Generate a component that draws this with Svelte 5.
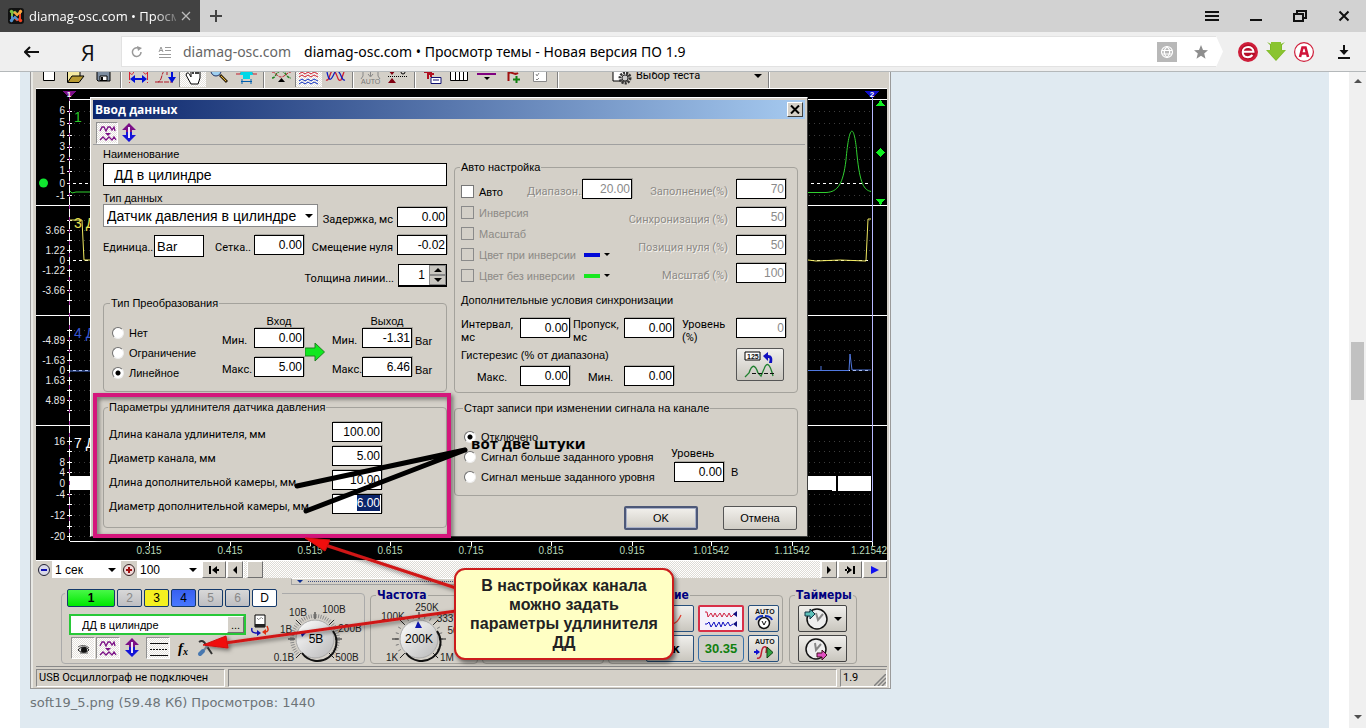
<script>
  const panes = [
    { labels: [['6', 110], ['5', 122], ['4', 134], ['3', 146], ['2', 158], ['1', 170], ['0', 183], ['-1', 195]], dots: [111, 123, 135, 147, 159, 171, 195] },
    { labels: [['3.66', 230], ['1.22', 250], ['0', 260], ['-1.22', 270], ['-3.66', 290]], dots: [220, 230, 240, 250, 270, 280, 290, 300] },
    { labels: [['-4.89', 340], ['-1.63', 360], ['0', 370], ['1.63', 380], ['4.89', 400]], dots: [330, 340, 350, 360, 380, 390, 400, 410] },
    { labels: [['16', 441], ['8', 462], ['4', 472], ['0', 483], ['-4', 494], ['-12', 515], ['-20', 536]], dots: [441, 451, 462, 472, 494, 504, 515, 526, 536] }
  ];
  const times = [['0.315', 149], ['0.415', 230], ['0.515', 310], ['0.615', 390], ['0.715', 471], ['0.815', 551], ['0.915', 632], ['1.01542', 711], ['1.11542', 792], ['1.21542', 872, 869]];
  const extender = [
    ['Длина канала удлинителя, мм', '100.00'],
    ['Диаметр канала, мм', '5.00'],
    ['Длина дополнительной камеры, мм', '10.00'],
    ['Диаметр дополнительной камеры, мм', '6.00']
  ];
  const autoFields = [['Заполнение(%)', '70'], ['Синхронизация (%)', '50'], ['Позиция нуля (%)', '50'], ['Масштаб (%)', '100']];
  const channels = [['1', 'one'], ['2', 'off'], ['3', 'three'], ['4', 'four'], ['5', 'off'], ['6', 'off'], ['D', 'digital']];
  const ticks = (cx, cy, from, to, n, r1, r2) =>
    Array.from({ length: n }, (_, i) => {
      const a = ((from + ((to - from) * i) / (n - 1)) * Math.PI) / 180;
      return `M${cx + r1 * Math.cos(a)} ${cy + r1 * Math.sin(a)}L${cx + r2 * Math.cos(a)} ${cy + r2 * Math.sin(a)}`;
    }).join('');
</script>

{#snippet tool(name, body, pressed)}
  <button class="tool" class:pressed aria-label={name}>
    <svg viewBox="0 0 27 16" width="27" height="16" fill="none">{@render body()}</svg>
  </button>
{/snippet}
{#snippet iNew()}<path d="M7.500 -4V8.500H18.500V-4Z" fill="#fff" stroke="#000" />{/snippet}
{#snippet iOpen()}<path d="M4.500 10V-1H17V4" fill="#f5e9a0" stroke="#000" /><path d="M4.500 10.500L9 4H21L16 10.500Z" fill="#b89a30" stroke="#000" />{/snippet}
{#snippet iSave()}<path d="M7 -3H20V9H8L7 8Z" fill="#7d8da0" stroke="#000" /><path d="M10 4H17V8.500H10Z" fill="#fff" stroke="#000" /><path d="M12 5V8" stroke="#000" stroke-width="2" />{/snippet}
{#snippet iSpan()}<path d="M4 -1C6 4 8 3 9 -1M18 -1C20 4 22 2 23 -1M4.500 0V11M22.500 0V11" stroke="#d82030" stroke-dasharray="8 2" /><path d="M7 7H20" stroke="#0010d8" stroke-width="2" /><path d="M5 7L10 3V11ZM22 7L17 3V11Z" fill="#0010d8" />{/snippet}
{#snippet iDrop()}<path d="M3 10H6C10 9 9 3 12 -1H15V3M6 10H21" stroke="#b01828" stroke-dasharray="5 1" /><path d="M20 -2V7" stroke="#0010d8" stroke-width="2" /><path d="M16 5H24L20 11Z" fill="#0010d8" />{/snippet}
{#snippet iHand()}<path d="M7 1C9 0 10 4 11 5V-3H13V2V-4H16V2V-3H18V2V-1H20V6L18 12H11L6 3Z" fill="#fff" stroke="#000" />{/snippet}
{#snippet iZoom()}<circle cx="10" cy="-1" r="5" fill="#9fd0f0" stroke="#203060" /><path d="M14 3L21 10" stroke="#3a2a10" stroke-width="3" /><path d="M15 4L20 9" stroke="#e8b830" />{/snippet}
{#snippet iProbe()}<path d="M3 2H7L10 -2H17L20 2H24" stroke="#c02030" /><path d="M8 -1H19L20 3H17V7H10V3H7Z" fill="#00d8e8" /><path d="M8 9.500H19M9 7V12M18 7V12" stroke="#0060b0" />{/snippet}
{#snippet iTrig()}<path d="M4 6C8 6 8 -1 13 -1S18 6 23 6" stroke="#208020" stroke-width="1.500" stroke-dasharray="3 1" /><path d="M4 0C8 0 9 5 13 5S19 0 23 0" stroke="#c02030" stroke-dasharray="3 1" /><path d="M10 10L13.500 6L17 10Z" fill="#000" />{/snippet}
{#snippet iWaves()}<path d="M3 2L6 0L9 2L12 0L15 2L18 0L22 2M3 5L6 3L9 5L12 3L15 5L18 3L22 5" stroke="#d02030" /><path d="M3 9L6 7L9 9L12 7L15 9L18 7L22 9M3 12L6 10L9 12L12 10L15 12L18 10L22 12" stroke="#1030c0" />{/snippet}
{#snippet iPhase()}<path d="M4 8C8 10 8 -4 12 -1S15 10 19 8L22 0" stroke="#d02030" stroke-width="1.300" /><path d="M5 0C7 10 9 8 11 4S14 -4 17 0S20 9 23 8" stroke="#1020c0" stroke-width="1.300" />{/snippet}
{#snippet iAuto()}<path d="M6 -1V4L4 7M21 -1V4L23 7M13.500 -2V4M11 2L13.500 5L16 2" stroke="#888" /><text x="4" y="12" class="micro" fill="#777">AUTO</text>{/snippet}
{#snippet iLevel()}<path d="M4 -2H12L8 3ZM4 11H12L8 6Z" fill="#800010" /><path d="M4 4.500H23" stroke="#000" stroke-dasharray="1 1" /><circle cx="19" cy="0" r="2" stroke="#000" />{/snippet}
{#snippet iTune()}<path d="M5 0H13M9 -1V7M9 2H15M12 1V5" stroke="#b01020" stroke-width="2" /><path d="M12 5.500H22V11.500H12Z" fill="#fff" stroke="#101070" /><path d="M14 8H20" stroke="#101070" />{/snippet}
{#snippet iCols()}<path d="M4.500 -2H21.500V8.500H4.500ZM9.500 0V8M13.500 0V8M17.500 0V8" fill="#fff" stroke="#000" />{/snippet}
{#snippet iCursor()}<path d="M4 2H23" stroke="#800080" stroke-width="2" /><path d="M11 5H17L14 8Z" fill="#000" />{/snippet}
{#snippet iFlag()}<path d="M8.500 9V0M9 1C12 -1 14 4 18 1" stroke="#a01010" stroke-width="2" /><path d="M16.500 4V11M13 7.500H20" stroke="#108010" stroke-width="2" />{/snippet}
{#snippet iList()}<path d="M6.500 -3H19.500V9.500H6.500Z" fill="#fff" stroke="#888" /><path d="M9 2L10 4L12 1M9 7L10 8L12 6" stroke="#888" />{/snippet}
{#snippet waveIcon()}<path d="M3 8L5 4L7 4L9 8L11 4L13 4L15 7L17 4L18 8M3 17L6 14L9 17L12 14L15 17L17 14L19 17" stroke="#7b1087" stroke-width="1.300" fill="none" /><path d="M8 10H14L11 13Z" fill="#7b1087" />{/snippet}
{#snippet updown()}<path d="M11 1L18 8H14V11H8V8H4Z" fill="#7b1087" /><path d="M11 20L18 13H14V10H8V13H4Z" fill="#1414d8" /><path d="M11 5V16" stroke="#f0e4f8" stroke-width="2" />{/snippet}

<div class="browser">
  <header class="tabs">
    <div class="tab">
      <svg viewBox="0 0 16 16" width="16" height="16"><rect width="16" height="16" rx="3" fill="#111" /><path d="M4 10V5L7 4L10 7" stroke="#7cc142" stroke-width="2" fill="none" /><path d="M6 4L9 7L12 4V8" stroke="#f9a541" stroke-width="2" fill="none" /><path d="M12 6V11L9 12L6 9" stroke="#f44321" stroke-width="2" fill="none" /><path d="M10 12L7 9L4 12V8" stroke="#5091cd" stroke-width="2" fill="none" /><g><circle cx="3.500" cy="3.500" r="1.700" fill="#7cc142" /><circle cx="12.500" cy="3.500" r="1.700" fill="#f9a541" /><circle cx="12.500" cy="12.500" r="1.700" fill="#f44321" /><circle cx="3.500" cy="12.500" r="1.700" fill="#5091cd" /></g></svg>
      <span class="tab-title">diamag-osc.com • Просм</span>
      <button class="bare" aria-label="Закрыть вкладку"><svg viewBox="0 0 10 10" width="10" height="10"><path d="M1 1L9 9M9 1L1 9" stroke="#bbb" stroke-width="1.300" /></svg></button>
    </div>
    <button class="bare plus" aria-label="Новая вкладка"><svg viewBox="0 0 12 12" width="12" height="12"><path d="M6 0V12M0 6H12" stroke="#444" stroke-width="2" /></svg></button>
    <div class="winbtns">
      <button class="bare" aria-label="Меню"><svg viewBox="0 0 14 12" width="14" height="12"><path d="M0 2H14M0 6H14M0 10H14" stroke="#111" stroke-width="2" /></svg></button>
      <button class="bare" aria-label="Свернуть"><svg viewBox="0 0 12 12" width="12" height="12"><path d="M0 10H12" stroke="#111" stroke-width="2" /></svg></button>
      <button class="bare" aria-label="Окно"><svg viewBox="0 0 14 12" width="14" height="12" fill="none" stroke="#111" stroke-width="2"><path d="M1 4H10V11H1Z" /><path d="M4 4V1H13V8H10" /></svg></button>
      <button class="bare" aria-label="Закрыть"><svg viewBox="0 0 12 12" width="12" height="12"><path d="M1.500 1.500L10.500 10.500M10.500 1.500L1.500 10.500" stroke="#111" stroke-width="2" /></svg></button>
    </div>
  </header>

  <nav class="bar">
    <button class="bare back" aria-label="Назад"><svg viewBox="0 0 15 12" width="15" height="12" fill="none" stroke="#111" stroke-width="2"><path d="M1 6H15M6 1L1 6L6 11" /></svg></button>
    <a class="ya" href="#ya">Я</a>
    <div class="address">
      <button class="bare" aria-label="Обновить"><svg viewBox="0 0 12 12" width="12" height="12" fill="none"><path d="M10 6A4.300 4.300 0 1 1 7 2" stroke="#999" stroke-width="1.500" /><path d="M6 0L11 2L7 5Z" fill="#999" /></svg></button>
      <svg class="reader" viewBox="0 0 14 12" width="14" height="12" fill="none" stroke="#999"><path d="M1 6L3 1L5 6M2 4.500H4.500M7 1.500H13M7 4.500H13M1 8.500H13M1 11.500H13" /></svg>
      <span class="host">diamag-osc.com</span>
      <span class="title">diamag-osc.com • Просмотр темы - Новая версия ПО 1.9</span>
      <svg class="globe" viewBox="0 0 20 20" width="20" height="20" fill="none" stroke="#fff" stroke-width="1.200"><rect width="20" height="20" fill="#b8b8b8" stroke="none" /><circle cx="10" cy="10" r="5.500" /><path d="M10 4.500C6.500 8 6.500 12 10 15.500C13.500 12 13.500 8 10 4.500M5 8.500H15M5 12H15" /></svg>
      <svg viewBox="0 0 14 14" width="14" height="14"><path d="M7 0L9 5L14 5.300L10.200 8.500L11.500 13.700L7 10.800L2.500 13.700L3.800 8.500L0 5.300L5 5Z" fill="#8e8e8e" /></svg>
    </div>
    <svg class="tip" viewBox="0 0 8 31" width="8" height="31"><path d="M0 0L7 15.500L0 31Z" fill="#fff" /></svg>
    <div class="ext">
      <svg viewBox="0 0 20 20" width="20" height="20"><circle cx="10" cy="10" r="10" fill="#cf1e3a" /><circle cx="10" cy="10" r="7.500" fill="#b50f2a" /><path d="M4.500 9.800H15.500C15.500 3.500 4.700 3.500 4.700 10S12 16 14.500 13" fill="none" stroke="#fff" stroke-width="2" /></svg>
      <svg viewBox="0 0 20 20" width="20" height="20"><path d="M1 0L4 3V8H0L10 19L20 8H16V3L19 0L15 2V8H5V2Z" fill="#7db928" /><path d="M5 0H15V8H19L10 18L1 8H5Z" fill="#8ac430" /></svg>
      <svg viewBox="0 0 20 20" width="20" height="20"><circle cx="10" cy="10" r="9.400" fill="#fff" stroke="#cf1e3a" stroke-width="1.200" /><path d="M6 15L8.500 5.500H11.500L14 15M7 11.500H13" fill="none" stroke="#d0143a" stroke-width="2.600" /></svg>
    </div>
    <button class="bare dl" aria-label="Загрузки"><svg viewBox="0 0 12 14" width="12" height="14"><path d="M6 0V8M0 13H12" stroke="#111" stroke-width="2" /><path d="M1.500 5H10.500L6 10Z" fill="#111" /></svg></button>
  </nav>

  <div class="viewport">
    <main class="post">
      <figure>
        <div class="app">
          <div class="toolbar">
            {@render tool('Новый', iNew)}{@render tool('Открыть', iOpen)}{@render tool('Сохранить', iSave)}
            <i class="sep"></i>
            {@render tool('Период', iSpan)}{@render tool('Спад', iDrop)}{@render tool('Рука', iHand, true)}{@render tool('Лупа', iZoom)}{@render tool('Щуп', iProbe)}
            <i class="sep"></i>
            {@render tool('Триггер', iTrig)}{@render tool('Волны', iWaves, true)}{@render tool('Фаза', iPhase)}
            <i class="sep"></i>
            {@render tool('Авто', iAuto)}{@render tool('Уровень', iLevel)}
            <i class="sep"></i>
            {@render tool('Настройка', iTune)}{@render tool('Таблица', iCols)}{@render tool('Курсор', iCursor)}{@render tool('Флаг', iFlag)}{@render tool('Список', iList)}
            <i class="sep"></i>
            <button class="test">
              <svg viewBox="0 0 20 14" width="20" height="14" fill="none"><path d="M1 -2H15V9H1Z" fill="#fff" stroke="#000" /><circle cx="13" cy="6" r="5" stroke="#333" stroke-width="3" stroke-dasharray="2 1" /><circle cx="13" cy="6" r="3" fill="#ccc" stroke="#333" /></svg>
              <span>Выбор теста</span><i class="tri"></i>
            </button>
            <i class="sep"></i>
          </div>

          <svg class="scope" viewBox="36 89 851 471" shape-rendering="crispEdges">
            <rect x="36" y="89" width="851" height="471" fill="#000" />
            {#each panes as p}
              {#each p.dots as y}<path d="M74 {y + 0.5}H870" stroke="#3c3c3c" stroke-dasharray="1 4" /><path d="M67 {y + 0.5}H72" stroke="#fff" />{/each}
              {#each p.labels as [t, y]}<text x="65" y={y + 4} text-anchor="end" class="axis">{t}</text>{/each}
            {/each}
            <path d="M69.500 99.500H887M36 205.500H887M36 315.500H887M36 425.500H887M69.500 541.500H873" stroke="#fff" fill="none" />
            <path d="M69.500 100V541" stroke="#fff" /><path d="M69.500 97V541" stroke="#9a2a9a" stroke-dasharray="4 8" />
            <path d="M872.500 97V546" stroke="#b8b8ff" />
            <path d="M67 183.500H870M67 260.500H870M67 370.500H870" stroke="#fff" stroke-dasharray="3 3" />
            <path d="M62 91H76L69 98Z" fill="#7b1087" /><path d="M864 91H880L872 98Z" fill="#1010c8" />
            <text x="69" y="97" class="mark">1</text><text x="872" y="97" class="mark">2</text>
            <text x="74" y="122" class="ch" fill="#28c828">1</text>
            <text x="74" y="228" class="ch" fill="#e8e050">3 Д</text>
            <text x="74" y="338" class="ch" fill="#3858d0">4 Д</text>
            <text x="74" y="448" class="ch" fill="#fff">7 Д</text>
            <g fill="none" shape-rendering="auto">
              <path d="M70 191L72 193L76 192H91M808 192.500H826C838 192 843 184 846 160C849 125 854 120 857 155C860 184 864 190 871 191.500" stroke="#30d030" />
              <path d="M70 220H82L84 260H91M808 260L816 261L840 260L866 261L868 219H871" stroke="#f0e860" />
              <path d="M70 371H91M808 370.500H849L850 354L852 370H871M821 370V366" stroke="#5078e0" />
            </g>
            <path d="M70 476H91V490H70ZM808 476H836V491L828 490H808ZM838 476H871V491H838Z" fill="#fff" />
            <circle cx="43.500" cy="183" r="4.500" fill="#10e830" shape-rendering="auto" />
            <path d="M876 106H885L880.500 100ZM880.500 148L885 152.500L880.500 157L876 152.500ZM876 199H885L880.500 205Z" fill="#10f020" />
            {#each times as [t, x, tx]}<path d="M{x + 0.5} 542V546" stroke="#fff" /><text x={tx ?? x} y="554" text-anchor="middle" class="time">{t}</text>{/each}
          </svg>

          <div class="transport">
            <button class="sq" aria-label="Уменьшить"><svg viewBox="0 0 16 16" width="16" height="16"><circle cx="8" cy="8" r="5.500" fill="#d8d8e8" stroke="#223" /><path d="M5 8H11" stroke="#1010b0" stroke-width="2" /></svg></button>
            <span class="combo c1"><select aria-label="Время"><option>1 сек</option></select></span>
            <button class="sq" aria-label="Увеличить"><svg viewBox="0 0 16 16" width="16" height="16"><circle cx="8" cy="8" r="5.500" fill="#f0d8d8" stroke="#322" /><path d="M5 8H11M8 5V11" stroke="#a01010" stroke-width="2" /></svg></button>
            <span class="combo c2"><select aria-label="Масштаб"><option>100</option></select></span>
            <button class="rb wide" aria-label="В начало"><svg viewBox="0 0 12 8" width="12" height="8"><path d="M1 0H3V8H1ZM4 4L9 0V8ZM8 3H11V5H8Z" /></svg></button>
            <button class="rb" aria-label="Назад по времени"><svg viewBox="0 0 6 8" width="6" height="8"><path d="M5 0V8L1 4Z" /></svg></button>
            <div class="track"><button class="rb" aria-label="Ползунок"></button></div>
            <button class="rb" aria-label="Вперёд по времени"><svg viewBox="0 0 6 8" width="6" height="8"><path d="M1 0V8L5 4Z" /></svg></button>
            <button class="rb wide" aria-label="В конец"><svg viewBox="0 0 12 8" width="12" height="8"><path d="M9 0H11V8H9ZM8 4L3 0V8ZM1 3H4V5H1Z" /></svg></button>
            <button class="rb wide" aria-label="Пуск"><svg viewBox="0 0 10 8" width="10" height="8"><path d="M1 0V8L9 4Z" fill="#1010f0" /></svg></button>
          </div>

          <div class="splitter"><i class="tri navy"></i><i class="dotline"></i></div>

          <div class="controls">
            <section class="channel">
              <div class="chrow">
                {#each channels as [n, c]}<button class="chb {c}">{n}</button>{/each}
              </div>
              <div class="chbody">
                <div>
                  <div class="namerow">
                    <span class="name"><input aria-label="Имя канала" value="ДД в цилиндре" /><button class="rb" aria-label="Выбрать">...</button></span>
                    <svg viewBox="0 0 20 22" width="20" height="22" fill="none"><path d="M5 1H15V13H5Z" fill="#fff" stroke="#000" /><path d="M5 10H15V13H5Z" fill="#222" /><path d="M7 4L9 6L11 3L13 5" stroke="#555" stroke-dasharray="1 1" /><path d="M2 14C1 18 3 19 7 19" stroke="#1414b0" stroke-width="1.500" /><path d="M7 16V22L11 19Z" fill="#1414b0" /><path d="M17 12C19 16 18 18 15 18" stroke="#e03010" stroke-width="1.500" /><path d="M16 15V21L12 18Z" fill="#e03010" /></svg>
                  </div>
                  <div class="iconrow">
                    <button class="ib pressed" aria-label="Показать"><svg viewBox="0 0 22 22" width="22" height="22"><path d="M6 12C9 8 14 8 17 12C14 15 9 15 6 12Z" fill="#ddd" stroke="#222" /><circle cx="12" cy="12" r="3" fill="#111" /><path d="M6 9C9 7 14 7 17 10M8 15H16" stroke="#555" fill="none" /></svg></button>
                    <button class="ib pressed" aria-label="Сглаживание"><svg viewBox="0 0 22 22" width="22" height="22">{@render waveIcon()}</svg></button>
                    <button class="ib" aria-label="Сдвиг"><svg viewBox="0 0 22 22" width="22" height="22">{@render updown()}</svg></button>
                    <button class="ib pressed" aria-label="Сетка"><svg viewBox="0 0 22 22" width="22" height="22" stroke="#111"><path d="M3 5.500H21M3 17.500H21" /><path d="M3 11.500H21" stroke-dasharray="2 1" /></svg></button>
                    <button class="ib fx" aria-label="Функция">f<sub>x</sub></button>
                    <button class="ib" aria-label="Настройки"><svg viewBox="0 0 22 22" width="22" height="22" fill="none"><path d="M3 5C6 3 8 4 10 8L16 17" stroke="#333" stroke-width="2" /><path d="M14 6L8 13" stroke="#8090a0" stroke-width="2" /><path d="M7 14L4 17" stroke="#4878b0" stroke-width="4" stroke-linecap="round" /></svg></button>
                  </div>
                </div>
                <svg class="knob" viewBox="271 598 92 66" width="92" height="66">
                  <defs><linearGradient id="kg" x1="0" y1="0" x2="1" y2="1"><stop offset="0" stop-color="#fff" /><stop offset="1" stop-color="#b8b8b8" /></linearGradient></defs>
                  <path d={ticks(315, 638, 135, 405, 46, 21, 25)} stroke="#8a8a8a" />
                  <path d={ticks(315, 638, 135, 405, 7, 20, 27)} stroke="#222" />
                  <circle cx="315" cy="638" r="19" fill="url(#kg)" stroke="#aaa" /><path d="M333 630A19 19 0 0 1 302 652" fill="none" stroke="#111" stroke-width="2" /><path d="M300 630L306 632L302 636Z" fill="#1018b0" />
                  <text x="316" y="642" class="kv">5В</text>
                  <text x="298" y="615" class="kt">10В</text><text x="334" y="612" class="kt">100В</text><text x="286" y="632" class="kt">1В</text><text x="350" y="631" class="kt">200В</text><text x="284" y="660" class="kt">0.1В</text><text x="347" y="660" class="kt">500В</text>
                </svg>
              </div>
            </section>
            <fieldset class="panel freq">
              <legend>Частота</legend>
              <svg viewBox="376 602 92 60" width="92" height="60">
                <path d={ticks(419, 639, 135, 405, 19, 21, 24)} stroke="#777" />
                <path d={ticks(419, 639, 135, 405, 7, 20, 27)} stroke="#222" />
                <circle cx="419" cy="639" r="19" fill="url(#kg)" stroke="#aaa" /><path d="M437 631A19 19 0 0 1 406 653" fill="none" stroke="#111" stroke-width="2" /><path d="M415 628L418 621L422 628Z" fill="#1018b0" />
                <text x="419" y="643" class="kv">200K</text>
                <text x="392" y="661" class="kt">1K</text><text x="393" y="620" class="kt">100K</text><text x="427" y="611" class="kt">250K</text><text x="445" y="622" class="kt">333</text><text x="453" y="634" class="kt">50</text><text x="447" y="661" class="kt">1M</text>
              </svg>
            </fieldset>
            <fieldset class="panel blank"></fieldset>
            <fieldset class="panel sync">
              <legend>ие</legend>
              <div class="pads">
                <button class="pad" aria-label="Форма сигнала"><svg viewBox="0 0 30 20" width="30" height="20" fill="none"><path d="M2 4C6 0 8 4 10 9S20 20 26 6" stroke="#e04030" stroke-width="1.300" /></svg></button>
                <button class="pad red" aria-label="Два сигнала"><svg viewBox="0 0 36 20" width="36" height="20" fill="none"><path d="M2 3H4L5 8L8 4L10 8L12 4L14 8L17 4L19 8L21 4L24 8L26 4L28 8L31 5" stroke="#d02040" /><path d="M2 15H4L6 13L8 18L11 13L13 18L16 13L18 18L20 13L22 17L25 13L27 17L30 15" stroke="#1010c0" /><path d="M34 2V8L30 5ZM34 12V18L30 15Z" fill="#101080" /></svg></button>
                <button class="pad" aria-label="Авто напряжение"><svg viewBox="0 0 24 24" width="24" height="24" fill="none"><text x="3" y="7" class="micro b">AUTO</text><circle cx="12" cy="16" r="5.500" fill="#fff" stroke="#111" stroke-width="1.500" /><path d="M10 14L12 18L14 14" stroke="#111" /><path d="M4 13C5 10 8 9 11 9M20 13C19 10 16 9 13 9" stroke="#1030c0" stroke-width="2" /></svg></button>
                <button class="pad k">к</button>
                <button class="pad num">30.35</button>
                <button class="pad" aria-label="Авто запуск"><svg viewBox="0 0 24 24" width="24" height="24" fill="none"><text x="3" y="7" class="micro b">AUTO</text><path d="M2 15H7" stroke="#1010d0" stroke-width="2" /><path d="M4 12L8 15L4 18Z" fill="#1010d0" /><path d="M5 21C11 23 8 11 12 10S14 14 14 16" stroke="#c02030" stroke-width="1.500" /><path d="M15 10L21 15.500L15 21Z" fill="#30a040" stroke="#104010" /></svg></button>
              </div>
            </fieldset>
            <fieldset class="panel timers">
              <legend>Таймеры</legend>
              <button class="pad" aria-label="Таймер старта"><svg viewBox="0 0 24 24" width="24" height="24"><circle cx="13" cy="12" r="10" fill="#eee" stroke="#111" stroke-width="1.500" /><path d="M12 6L14 13L19 7" fill="none" stroke="#888" stroke-width="2" /><path d="M1 5H6V2L11 7L6 12V9H1Z" fill="#5cc0b8" stroke="#134" /></svg><i class="tri"></i></button>
              <button class="pad" aria-label="Таймер остановки"><svg viewBox="0 0 24 24" width="24" height="24"><circle cx="12" cy="12" r="10" fill="#eee" stroke="#111" stroke-width="1.500" /><path d="M11 6L12 13L17 7" fill="none" stroke="#888" stroke-width="2" /><path d="M13 16H18V13L23 18L18 23V20H13Z" fill="#e050c0" stroke="#412" /></svg><i class="tri"></i></button>
            </fieldset>
          </div>

          <div class="status">
            <span class="s1">USB Осциллограф не подключен</span><span class="s2"></span><span class="s3">1.9<svg viewBox="0 0 12 12" width="12" height="12"><path d="M0 12L12 0M4 12L12 4M8 12L12 8" stroke="#808080" stroke-width="1.500" /></svg></span>
          </div>
        </div>

        <div class="dialog" role="dialog" aria-label="Ввод данных">
          <div class="caption"><span>Ввод данных</span><button aria-label="Закрыть окно"><svg viewBox="0 0 10 9" width="10" height="9"><path d="M1 0.500L9 8.500M9 0.500L1 8.500" stroke="#000" stroke-width="2" /></svg></button></div>
          <div class="strip">
            <button class="ib pressed" aria-label="Фильтр"><svg viewBox="0 0 22 22" width="22" height="22">{@render waveIcon()}</svg></button>
            <button class="ib" aria-label="Инверсия сигнала"><svg viewBox="0 0 22 22" width="22" height="22">{@render updown()}</svg></button>
          </div>
          <div class="body">
            <div class="left">
              <label class="top" for="nm">Наименование</label>
              <input id="nm" class="text" value="ДД в цилиндре" />
              <label class="top second" for="ty">Тип данных</label>
              <div class="row r2">
                <span class="combo type"><select id="ty"><option>Датчик давления в цилиндре</option></select></span>
                <label class="t grow" for="delay">Задержка, мс</label><input id="delay" class="num" value="0.00" />
              </div>
              <div class="row r3">
                <label class="t" for="unit">Единица..</label><input id="unit" class="text unit" value="Bar" />
                <label class="t grid" for="mesh">Сетка..</label><input id="mesh" class="num" value="0.00" />
                <label class="t grow" for="zero">Смещение нуля</label><input id="zero" class="num" value="-0.02" />
              </div>
              <div class="row r4">
                <label class="t grow" for="thick">Толщина линии...</label>
                <span class="spin"><input id="thick" value="1" /><span><button aria-label="Больше"><i class="tri up"></i></button><button aria-label="Меньше"><i class="tri"></i></button></span></span>
              </div>
              <fieldset class="conv">
                <legend>Тип Преобразования</legend>
                <div class="convbody">
                  <div class="radios">
                    <label><input type="radio" name="conv" />Нет</label>
                    <label><input type="radio" name="conv" />Ограничение</label>
                    <label><input type="radio" name="conv" checked />Линейное</label>
                  </div>
                  <div class="io">
                    <span></span><span class="hd">Вход</span><span></span><span></span><span class="hd">Выход</span><span></span>
                    <label class="t" for="i1">Мин.</label><input id="i1" class="num" value="0.00" /><svg class="go" viewBox="0 0 20 20" width="20" height="20"><path d="M0 6H10V1L19.500 10L10 19V14H0Z" fill="#10e820" stroke="#208020" /></svg><label class="t" for="o1">Мин.</label><input id="o1" class="num" value="-1.31" /><span class="u">Bar</span>
                    <label class="t" for="i2">Макс.</label><input id="i2" class="num" value="5.00" /><label class="t" for="o2">Макс.</label><input id="o2" class="num" value="6.46" /><span class="u">Bar</span>
                  </div>
                </div>
              </fieldset>
              <fieldset class="ext2">
                <legend>Параметры удлинителя датчика давления</legend>
                {#each extender as [l, v], i}
                  <div class="er"><label class="t" for="e{i}">{l}</label>{#if i === 3}<span class="num selbox"><mark>{v}</mark></span>{:else}<input id="e{i}" class="num" value={v} />{/if}</div>
                {/each}
              </fieldset>
            </div>

            <div class="right">
              <fieldset class="auto">
                <legend>Авто настройка</legend>
                <div class="autobody">
                  <div class="checks">
                    <div class="first"><label class="c"><input type="checkbox" />Авто</label><label class="t dis" for="rng">Диапазон..</label><input id="rng" class="num" value="20.00" disabled /></div>
                    <label class="c dis"><input type="checkbox" disabled />Инверсия</label>
                    <label class="c dis"><input type="checkbox" disabled />Масштаб</label>
                    <div class="colour"><label class="c dis"><input type="checkbox" disabled />Цвет при инверсии</label><i class="sw" style:background="#0008d8"></i><i class="tri"></i></div>
                    <div class="colour"><label class="c dis"><input type="checkbox" disabled />Цвет без инверсии</label><i class="sw" style:background="#18e820"></i><i class="tri"></i></div>
                  </div>
                  <div class="percents">
                    {#each autoFields as [l, v], i}<label class="t dis" for="a{i}">{l}</label><input id="a{i}" class="num" value={v} disabled />{/each}
                  </div>
                </div>
                <p>Дополнительные условия синхронизации</p>
                <div class="sync2">
                  <label class="m" for="s1">Интервал,<br />мс</label><input id="s1" class="num" value="0.00" />
                  <label class="m near" for="s2">Пропуск,<br />мс</label><input id="s2" class="num" value="0.00" />
                  <label class="m lvl" for="s3">Уровень<br />(%)</label><input id="s3" class="num" value="0" disabled />
                  <p class="hyst">Гистерезис (% от диапазона)</p>
                  <button class="pad wave" aria-label="Подобрать"><svg viewBox="0 0 34 28" width="34" height="28" fill="none"><path d="M2 1H17V9H2Z" fill="#fff" stroke="#000" /><text x="4" y="8" class="micro b">125</text><path d="M20 5L25 1V4C29 4 30 7 29 12H26C27 8 27 7 25 7V10Z" fill="#1010c0" /><path d="M2 26L6 22C9 13 12 13 15 22L18 25L21 18C24 10 27 13 30 25" stroke="#208030" stroke-width="1.300" /><path d="M9 22.500H32" stroke="#111" stroke-dasharray="4 2" /></svg></button>
                  <label class="t h1" for="h1">Макс.</label><input id="h1" class="num" value="0.00" />
                  <label class="t h2" for="h2">Мин.</label><input id="h2" class="num" value="0.00" />
                </div>
              </fieldset>
              <fieldset class="start">
                <legend>Старт записи при изменении сигнала на канале</legend>
                <div class="startbody">
                  <div class="radios">
                    <label><input type="radio" name="st" checked />Отключено</label>
                    <label><input type="radio" name="st" />Сигнал больше заданного уровня</label>
                    <label><input type="radio" name="st" />Сигнал меньше заданного уровня</label>
                  </div>
                  <div class="lv"><label class="t" for="lv">Уровень</label><div><input id="lv" class="num" value="0.00" /><span>В</span></div></div>
                </div>
              </fieldset>
              <div class="actions"><button class="btn ok">OK</button><button class="btn">Отмена</button></div>
            </div>
          </div>
        </div>

        <svg class="marks" viewBox="30 72 861 617" width="861" height="617" fill="none">
          <defs><filter id="sh" x="-10%" y="-10%" width="120%" height="120%"><feDropShadow dx="2" dy="2" stdDeviation="2" flood-opacity="0.5" /></filter></defs>
          <rect x="95" y="395" width="354" height="141" stroke="#d4177c" stroke-width="4" filter="url(#sh)" />
          <path d="M297 486L465 450M306 511L465 450" stroke="#000" stroke-width="5" stroke-linecap="round" />
          <text x="471" y="449" class="note">вот две штуки</text>
          <g filter="url(#sh)"><path d="M456 588L325 545M456 611L225 643" stroke="#d01818" stroke-width="3" /><path d="M305 538L330 540L325 551ZM203 645L226 636L228 648Z" fill="#f01010" stroke="#d01010" /></g>
        </svg>
        <div class="callout">В настройках канала можно задать параметры удлинителя ДД</div>
        <figcaption>soft19_5.png (59.48 Кб) Просмотров: 1440</figcaption>
      </figure>
    </main>
    <div class="scroll"><i class="tri up"></i><div class="thumb"></div><i class="tri"></i></div>
  </div>
</div>

<style>
  :global(body) { margin: 0; overflow: hidden; }
  .browser { --sys: 'Liberation Sans', Arial, sans-serif; --tah: Roboto, Tahoma, sans-serif; --tahb: 'DejaVu Sans Condensed', 'DejaVu Sans', sans-serif; height: 100vh; display: flex; flex-direction: column; overflow: hidden; background: #fff; font: 11px var(--sys); color: #000; }
  .browser :global(*) { box-sizing: border-box; }
  button, input, select { font: inherit; color: inherit; margin: 0; padding: 0; border-radius: 0; }
  svg { display: block; flex: none; }
  .bare { border: 0; background: none; display: flex; flex: none; }
  .tri { width: 0; height: 0; flex: none; border: 4px solid transparent; border-top-color: #000; border-bottom: 0; }
  .tri.up { border-top: 0; border-bottom: 4px solid #000; }
  .tri.navy { border-top-color: #103090; border-width: 3px; border-bottom: 0; }

  .tabs { height: 32px; flex: none; display: flex; align-items: center; background: #d2d2d2; }
  .tab { width: 200px; height: 32px; background: #424242; display: flex; align-items: center; padding: 0 9px 0 8px; gap: 5px; font: 13px 'Open Sans', sans-serif; color: #fff; }
  .tab-title { flex: 1; min-width: 0; white-space: nowrap; mask-image: linear-gradient(90deg, #000 85%, transparent 105%); }
  .plus { margin-left: 10px; }
  .winbtns { margin-left: auto; display: flex; gap: 31px; padding-right: 16px; }
  .bar { height: 40px; flex: none; display: flex; align-items: center; background: #efefef; border-bottom: 1px solid #b4b8ba; }
  .back { margin-left: 24px; }
  .ya { width: 82px; text-align: center; text-decoration: none; color: #111; font: 22px 'Liberation Sans Narrow', 'Open Sans', sans-serif; }
  .bar .ya { padding-left: 16px; }
  .address { flex: 1; height: 31px; background: #fff; border: 1px solid #e2e2e2; border-right: 0; display: flex; align-items: center; font: 14px 'Noto Sans', sans-serif; padding: 0 8px 0 9px; white-space: nowrap; }
  .reader { margin: 0 11px 0 15px; }
  .host { color: #666; margin-right: 13px; }
  .title { flex: 1; }
  .globe { margin-right: 17px; }
  .ext { display: flex; gap: 8px; margin: 0 24px 0 14px; }
  .dl { margin-right: 16px; }

  .viewport { flex: 1; min-height: 0; display: flex; background: #fff; padding-left: 20px; }
  .post { flex: 1; background: #e0eaf1; padding-left: 10px; margin-right: 20px; overflow: hidden; }
  .scroll { width: 17px; background: #f0f0f0; display: flex; flex-direction: column; align-items: center; padding: 7px 0 9px; }
  .scroll .tri { border-top-color: #505050; border-bottom-color: #505050; }
  .thumb { width: 13px; height: 58px; background: #c1c1c1; margin: 259px auto auto; }

  figure { position: relative; margin: 0; width: 861px; max-width: 100%; }
  .app { background: #d4d0c8; border: solid #9a9a9a; border-width: 0 1px 1px; padding: 0 3px 1px 5px; box-shadow: inset 2px 0 0 #e8e8e4, inset -1px 0 0 #f4f4f4; }
  .toolbar { height: 17px; display: flex; overflow: hidden; border-bottom: 1px solid #fff; }
  .tool { width: 27px; height: 15px; flex: none; border: 0; background: none; overflow: hidden; }
  .pressed { background: repeating-conic-gradient(#fff 0 25%, #e4e1dc 0 50%) 0 0 / 2px 2px; border: solid #808080; border-width: 0 0 0 1px; }
  .tool.pressed { background-color: #eee; }
  .sep { width: 8px; flex: none; background: linear-gradient(90deg, transparent 3px, #808080 3px 4px, #fff 4px 5px, transparent 5px); }
  .test { border: 0; background: none; width: 203px; height: 14px; display: flex; align-items: flex-start; gap: 4px; padding-left: 50px; font: 11px/8px var(--tah); white-space: nowrap; }
  .test .tri { margin: 2px 3px 0 auto; }
  .micro { font: 7px var(--sys); }
  .b { font-weight: bold; fill: #111; }
  .scope { width: 100%; height: auto; }
  .axis { font: 10px var(--sys); fill: #e8e8e8; }
  .time { font: 10px var(--sys); fill: #b8d8b8; }
  .mark { font: bold 8px var(--sys); fill: #fff; text-anchor: middle; }
  .ch { font: 14px var(--sys); }

  .transport { display: flex; height: 18px; padding-top: 1px; gap: 1px; background: #fff; }
  .sq { width: 16px; border: 0; background: #d4d0c8; }
  .combo { position: relative; display: flex; background: #fff; }
  .combo::after { content: ''; position: absolute; right: 4px; top: 50%; margin-top: -2px; border: 4px solid transparent; border-top-color: #000; border-bottom: 0; pointer-events: none; }
  .combo select { appearance: none; border: 0; background: none; width: 100%; padding: 0 2px; font-size: 12px; outline: 0; }
  .c1, .c2 { width: 67px; }
  .c2 { width: 63px; }
  .rb { width: 16px; flex: none; display: grid; place-items: center; background: #d4d0c8; border: 1px solid; border-color: #fff #707070 #707070 #fff; }
  .rb.wide { width: 24px; }
  .track { flex: 1; display: flex; padding-left: 3px; background: repeating-conic-gradient(#fff 0 25%, #dedbd5 0 50%) 0 0 / 2px 2px; }
  .splitter { height: 7px; margin-left: 255px; width: 336px; border: 1px solid #a0a0a0; border-top-color: #fff; display: flex; align-items: center; gap: 5px; padding: 0 5px; }
  .dotline { flex: 1; border-top: 1px dotted #405080; }

  .controls { height: 82px; display: flex; padding-left: 25px; border-bottom: 1px solid #888; align-items: flex-start; padding-top: 3px; }
  .channel { width: 304px; height: 71px; margin: 5px 5px 0 0; border: 1px solid #aaa; border-radius: 4px; }
  .chrow { display: flex; gap: 2px; margin: -5px 0 0 3px; width: 217px; padding: 0 2px; background: #d4d0c8; }
  .chb { width: 25px; height: 18px; border: 1px solid #153a6b; border-radius: 2px; font-size: 12px; }
  .chb.one { width: 48px; font-weight: bold; background: linear-gradient(#48f848, #00e800); }
  .chb.off { background: linear-gradient(#d8d8d8, #bebec2); color: #888; }
  .chb.three { background: #f4f020; }
  .chb.four { background: linear-gradient(#3860f0, #4878ff); }
  .chb.digital { background: #fff; }
  .chbody { display: flex; margin-top: 7px; }
  .chbody > div { width: 209px; padding-left: 7px; }
  .namerow { display: flex; gap: 4px; }
  .name { width: 177px; height: 21px; display: flex; border: 2px solid #28c838; background: #fff; }
  .name input { flex: 1; min-width: 0; border: 0; padding-left: 11px; font-size: 11px; }
  .name .rb { width: 17px; line-height: 8px; }
  .iconrow { display: flex; gap: 1px; margin-top: 1px; padding-left: 2px; }
  .ib { width: 24px; height: 22px; border: 0; background: none; flex: none; }
  .ib.pressed { background: repeating-conic-gradient(#fff 0 25%, #e4e1dc 0 50%) 0 0 / 2px 2px; border: 1px solid; border-color: #909090 #fff #fff #909090; }
  .fx { font: italic bold 15px 'Liberation Serif', serif; }
  .fx sub { font-size: 10px; vertical-align: -2px; }
  .knob { margin-top: -15px; }
  .kv { font: 12px var(--sys); text-anchor: middle; }
  .kt { font: 10px var(--sys); text-anchor: middle; fill: #222; }
  fieldset { margin: 0; padding: 0; min-width: 0; border: 1px solid #a4a29c; border-radius: 4px; }
  legend { padding: 0 1px; margin-left: 6px; line-height: 12px; white-space: nowrap; }
  .panel { height: 76px; width: 108px; margin-right: 4px; flex: none; }
  .panel legend { font: bold 12px/14px var(--tahb); color: #000080; margin-left: 5px; }
  .freq svg { margin-left: 5px; }
  .blank { width: 122px; height: 70px; margin-top: 6px; }
  .sync { width: 175px; margin-right: 6px; }
  .panel.sync legend { margin-left: 64px; }
  .pads { display: grid; grid-template-columns: 48px 46px 31px; gap: 3px 4px; justify-content: end; padding: 3px 3px 0 0; }
  .pad { height: 27px; border: 1px solid #28507c; border-radius: 2px; background: linear-gradient(#f0efec, #c9c6be); display: flex; align-items: center; justify-content: center; }
  .pad.red { border: 2px solid #d83048; background: #f4f2fc; }
  .pad.k { font: bold 13px var(--tahb); justify-content: flex-end; padding-right: 13px; }
  .pad.num { font: bold 13px var(--sys); color: #108010; background: #d0cec8; border-color: #3870a8; border-radius: 4px; }
  .timers { width: 68px; }
  .timers .pad { width: 49px; margin: 3px 0 0 8px; gap: 6px; border-color: #444; }
  .status { display: flex; gap: 3px; height: 20px; padding-top: 2px; font: 11px/16px var(--tah); }
  .status span { border: 1px solid; border-color: #888 #fff #fff #888; padding-left: 2px; white-space: nowrap; }
  .s1 { width: 189px; }
  .s2 { flex: 1; }
  .s3 { width: 47px; display: flex; justify-content: space-between; align-items: flex-end; }
  figcaption { font: 13px/16px 'DejaVu Sans', sans-serif; color: #6d7478; padding-top: 6px; }

  .dialog { position: absolute; left: 60px; top: 25px; width: 718px; height: 440px; padding: 2px; background: #d4d0c8; border: 1px solid; border-color: #fff #404040 #404040 #fff; }
  .caption { height: 19px; display: flex; align-items: center; justify-content: space-between; padding: 0 2px; color: #fff; font: bold 12px 'Open Sans', sans-serif; background: linear-gradient(90deg, #0a246a, #a6caf0); }
  .caption button { width: 16px; height: 15px; display: grid; place-items: center; background: #d4d0c8; border: 1px solid; border-color: #fff #404040 #404040 #fff; }
  .strip { height: 26px; display: flex; padding: 3px 3px 0; border-bottom: 1px solid #a0a0a0; }
  .strip .ib { width: 22px; }
  .body { display: grid; grid-template-columns: minmax(0, 1fr) minmax(0, 1fr); gap: 7px; padding: 0 7px 0 10px; }
  .top { display: block; line-height: 12px; margin: 3px 0; }
  .top.second { margin: 6px 0 0; }
  .text { display: block; width: 100%; height: 23px; border: 1px solid #000; background: #fff; font-size: 14px; padding-left: 10px; }
  .unit { width: 50px; height: 22px; padding-left: 2px; font-size: 13px; }
  input.num, .selbox { width: 50px; height: 20px; flex: none; border: 1px solid #000; background: #fff; text-align: right; font-size: 12px; padding: 0 1px 1px 0; box-shadow: 1px -1px 0 #a8a6a0; }
  input:disabled { color: #8a8a8a; opacity: 1; }
  .selbox { display: block; line-height: 16px; }
  mark { background: #0a246a; color: #fff; padding: 1px 0; }
  .t { font: 11px/16px var(--tah); white-space: nowrap; }
  .row { display: flex; align-items: flex-end; }
  .r2 { height: 23px; margin-bottom: 8px; }
  .r2 .t { line-height: 14px; }
  .r3 { height: 22px; align-items: flex-start; margin-bottom: 7px; }
  .r3 .t { padding-top: 5px; }
  .r3 .t:first-child { width: 51px; }
  .t.grow { flex: 1; text-align: right; padding-right: 4px; }
  .t.grid { width: 50px; padding-left: 11px; }
  .type { width: 215px; height: 23px; border: 1px solid #888; }
  .type select { font-size: 14px; padding-left: 3px; }
  .spin { display: flex; width: 49px; height: 23px; border: solid #000; border-width: 1px 1px 2px 1px; background: #fff; }
  .spin input { width: 30px; border: 0; font-size: 12px; text-align: right; padding-right: 4px; }
  .spin > span { flex: 1; display: flex; flex-direction: column; }
  .spin button { flex: 1; display: grid; place-items: center; background: #c8c6c0; border: 1px solid #888; }
  .conv { height: 95px; margin-top: 10px; }
  .convbody { display: flex; padding: 6px 0 0 8px; }
  .radios { width: 110px; flex: none; display: flex; flex-direction: column; padding-top: 8px; }
  .radios label { height: 20px; display: flex; align-items: center; gap: 5px; white-space: nowrap; }
  input[type='radio'] { appearance: none; width: 12px; height: 12px; border-radius: 50%; border: 1px solid; border-color: #707070 #eee #eee #707070; background: #fff; }
  input[type='radio']:checked { background: radial-gradient(#000 0 2px, #fff 3px); }
  input[type='checkbox'] { appearance: none; width: 13px; height: 13px; border: 1px solid #777; background: #fff; }
  input[type='checkbox']:disabled { background: none; border-color: #8a8a8a; }
  .io { display: grid; grid-template-columns: 32px 50px 28px 30px 50px auto; grid-template-rows: 13px 29px 29px; }
  .io .t, .u { line-height: 26px; }
  .hd { text-align: center; line-height: 12px; }
  .u { padding-left: 3px; }
  .go { grid-row: 2 / 4; grid-column: 3; margin: 14px 0 0 1px; }
  .ext2 { height: 127px; margin-top: 9px; }
  .ext2 legend { margin-left: 4px; margin-bottom: 9px; }
  .er { display: flex; height: 24px; padding-left: 5px; }
  .er .t { width: 223px; line-height: 26px; }

  .auto { height: 232px; margin-top: 16px; padding: 0 11px 0 6px; }
  .auto legend, .start legend { margin-left: -1px; }
  .autobody { display: flex; height: 114px; margin-top: 6px; }
  .checks { width: 171px; flex: none; }
  .c { display: flex; align-items: center; gap: 5px; height: 21px; white-space: nowrap; }
  .first { display: flex; height: 23px; align-items: flex-start; }
  .first .c { height: 25px; width: 66px; }
  .first .t { width: 55px; line-height: 26px; }
  .dis { color: #8c8a86; text-shadow: 1px 1px 0 #f4f2ee; }
  .c.dis { text-shadow: none; }
  .colour { display: flex; align-items: center; gap: 4px; height: 21px; }
  .colour .c { width: 119px; }
  .sw { width: 16px; height: 4px; }
  .colour .tri { border-width: 3px; border-bottom: 0; }
  .percents { flex: 1; min-width: 0; display: grid; grid-template-columns: minmax(0, 1fr) 50px; grid-template-rows: repeat(4, 28px); column-gap: 8px; }
  .percents .t { justify-self: end; line-height: 26px; }
  p { margin: 0; line-height: 14px; white-space: nowrap; }
  .sync2 { display: grid; grid-template-columns: 59px 50px 54px 50px 62px 50px; grid-template-rows: 30px 18px 24px; margin-top: 11px; align-items: start; }
  .m { font: 11px/13px var(--tah); white-space: nowrap; }
  .near { padding-left: 3px; }
  .lvl { padding-left: 8px; }
  .hyst { grid-column: 1 / 6; grid-row: 2; }
  .wave { grid-column: 6; grid-row: 2 / 4; height: 33px; width: 48px; border-color: #555; }
  .h1, .h2, .h1 + input, .h2 + input { grid-row: 3; }
  .sync2 .h1 { padding-left: 16px; line-height: 24px; }
  .sync2 .h2 { padding-left: 18px; line-height: 24px; }
  .start { height: 94px; margin-top: 9px; padding-left: 9px; }
  .startbody { display: flex; padding-top: 5px; }
  .start .radios { width: 207px; }
  .lv { padding-top: 27px; }
  .lv div { display: flex; align-items: center; gap: 7px; padding-left: 3px; }
  .actions { display: flex; justify-content: flex-end; gap: 25px; padding: 10px 1px 0 0; }
  .btn { width: 74px; height: 24px; border: 1px solid #555; border-radius: 2px; background: linear-gradient(#f2f0ec, #d0cdc5); font-size: 11px; }
  .btn.ok { border: 2px solid #4d5878; box-shadow: inset 0 0 0 1px #a8b0c8; }

  .marks { position: absolute; left: 0; top: 0; pointer-events: none; }
  .note { font: bold 15px 'Open Sans', sans-serif; fill: #000; }
  .callout { position: absolute; left: 424px; top: 496px; width: 220px; padding: 6px 8px; border: 2px solid #cc1c1c; border-radius: 11px; background: #ffffc4; box-shadow: 2px 3px 4px rgb(0 0 0 / 0.5); font: bold 16px/19px var(--sys); color: #222; text-align: center; }
</style>
